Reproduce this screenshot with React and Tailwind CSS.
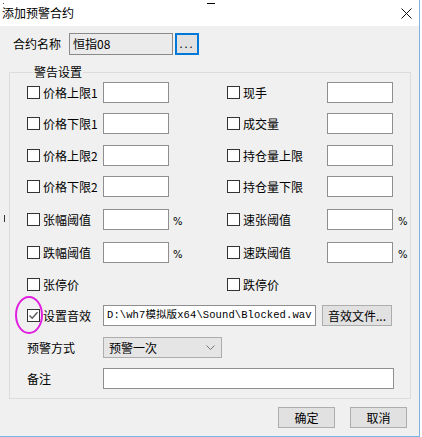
import React from "react";

const font = "font-['Microsoft_YaHei','Noto_Sans_CJK_SC',sans-serif]";

function Check({ checked }) {
  return (
    <span className="w-[13px] h-[13px] shrink-0 border border-[#333333] bg-white flex items-center justify-center">
      {checked && (
        <svg width="11" height="11" viewBox="0 0 11 11">
          <polyline points="1.5,5.5 4.2,8.2 9.5,2.2" fill="none" stroke="#5a5a5a" strokeWidth="1.4" />
        </svg>
      )}
    </span>
  );
}

function TextBox({ className = "", children }) {
  return (
    <div className={`h-[21px] border border-[#8f8f8f] bg-white flex items-center ${className}`}>
      {children}
    </div>
  );
}

function Pct() {
  return <span className="text-[10px] leading-none font-['DejaVu_Sans',sans-serif]">%</span>;
}

function Cell({ label, labelW, box = true, pct = false, width }) {
  return (
    <div className={`flex items-center ${width}`}>
      <Check />
      <span className={`ml-[3px] leading-[14px] ${labelW}`}>{label}</span>
      {box && <TextBox className="w-[66px]" />}
      {pct && (
        <span className={labelW === "w-[60px]" ? "ml-[4px]" : "ml-[5px]"}>
          <Pct />
        </span>
      )}
    </div>
  );
}

function Row({ left, right, mt }) {
  return (
    <div className={`flex items-center h-[21px] ${mt}`}>
      <Cell {...left} labelW="w-[60px]" width="w-[200px]" />
      {right && <Cell {...right} labelW="w-[84px]" width="" />}
    </div>
  );
}

const rows = [
  { mt: "mt-[3px]", left: { label: "价格上限1" }, right: { label: "现手" } },
  { mt: "mt-[10px]", left: { label: "价格下限1" }, right: { label: "成交量" } },
  { mt: "mt-[11px]", left: { label: "价格上限2" }, right: { label: "持仓量上限" } },
  { mt: "mt-[10px]", left: { label: "价格下限2" }, right: { label: "持仓量下限" } },
  { mt: "mt-[12px]", left: { label: "张幅阈值", pct: true }, right: { label: "速张阈值", pct: true } },
  { mt: "mt-[12px]", left: { label: "跌幅阈值", pct: true }, right: { label: "速跌阈值", pct: true } },
  { mt: "mt-[11px]", left: { label: "张停价", box: false }, right: { label: "跌停价", box: false } },
];

export default function App() {
  return (
    <div className={`relative w-[422px] h-[437px] bg-white text-black text-[12px] ${font}`}>
      <div className="w-[420px] h-[437px] border-r border-b border-[#7fb2e5] flex flex-col">
        {/* title bar */}
        <div className="h-[26px] shrink-0 flex items-center justify-between pl-[2px] pr-[7px]">
          <span className="leading-[14px]">添加预警合约</span>
          <svg width="11" height="11" viewBox="0 0 11 11">
            <path d="M0.5 0.5 L10.5 10.5 M10.5 0.5 L0.5 10.5" stroke="#111" strokeWidth="1" />
          </svg>
        </div>

        <div className="flex-1 bg-[#f0f0f0] flex flex-col">
          {/* contract name */}
          <div className="flex items-center mt-[7px] pl-[13px] h-[22px]">
            <span className="w-[56px] leading-[14px]">合约名称</span>
            <div className="w-[104px] h-[22px] border border-[#8a8a8a] bg-[#ebebeb] flex items-center pl-[3px] leading-[14px]">
              恒指08
            </div>
            <div className="ml-[2px] w-[24px] h-[22px] border-2 border-[#0078d7] bg-[#e1e1e1] flex items-center justify-center text-[11px] leading-none tracking-[2px] pb-[2px]">
              ...
            </div>
          </div>

          {/* group box */}
          <fieldset className="mt-[10px] ml-[9px] w-[402px] border border-[#dcdcdc] pl-[17px] pb-[9px]">
            <legend className="ml-[6px] px-[1px] leading-[14px]">警告设置</legend>
            {rows.map((r) => (
              <Row key={r.left.label} {...r} />
            ))}

            <div className="flex items-center h-[21px] mt-[10px]">
              <Check checked />
              <span className="ml-[3px] w-[60px] leading-[14px]">设置音效</span>
              <TextBox className="w-[213px] pl-[3px] text-[10.5px] tracking-[0.1px] font-['Liberation_Mono','Noto_Sans_CJK_SC',monospace] leading-none whitespace-nowrap overflow-hidden">
                D:\wh7模拟版x64\Sound\Blocked.wav
              </TextBox>
              <div className="ml-[6px] w-[70px] h-[21px] border border-[#adadad] bg-[#e1e1e1] flex items-center justify-center leading-[14px]">
                音效文件...
              </div>
            </div>

            <div className="flex items-center h-[21px] mt-[11px]">
              <span className="w-[76px] leading-[14px]">预警方式</span>
              <div className="w-[119px] h-[21px] border border-[#adadad] bg-[#e5e5e5] flex items-center justify-between pl-[5px] pr-[6px] leading-[14px]">
                <span>预警一次</span>
                <svg width="9" height="5" viewBox="0 0 9 5">
                  <polyline points="0.5,0.5 4.5,4.5 8.5,0.5" fill="none" stroke="#777" strokeWidth="1" />
                </svg>
              </div>
            </div>

            <div className="flex items-center h-[21px] mt-[10px]">
              <span className="w-[76px] leading-[14px]">备注</span>
              <TextBox className="w-[291px]" />
            </div>
          </fieldset>

          {/* buttons */}
          <div className="flex justify-end gap-[15px] pr-[12px] mt-[8px]">
            <div className="w-[57px] h-[21px] border border-[#adadad] bg-[#e1e1e1] flex items-center justify-center leading-[14px]">
              确定
            </div>
            <div className="w-[57px] h-[21px] border border-[#adadad] bg-[#e1e1e1] flex items-center justify-center leading-[14px]">
              取消
            </div>
          </div>
        </div>
      </div>

      {/* screenshot marks */}
      <div className="absolute left-[207px] top-[3px] w-[8px] h-[1px] bg-black" />
      <div className="absolute left-[3px] top-[3px] w-[1px] h-[1px] bg-[#555]" />
      <div className="absolute left-[4px] top-[215px] w-[1px] h-[7px] bg-[#333]" />

      {/* annotation ellipse */}
      <svg className="absolute left-[14px] top-[295px]" width="30" height="40" viewBox="0 0 30 40">
        <ellipse cx="15" cy="20" rx="13" ry="18" fill="none" stroke="#e020e0" strokeWidth="2" />
      </svg>
    </div>
  );
}
